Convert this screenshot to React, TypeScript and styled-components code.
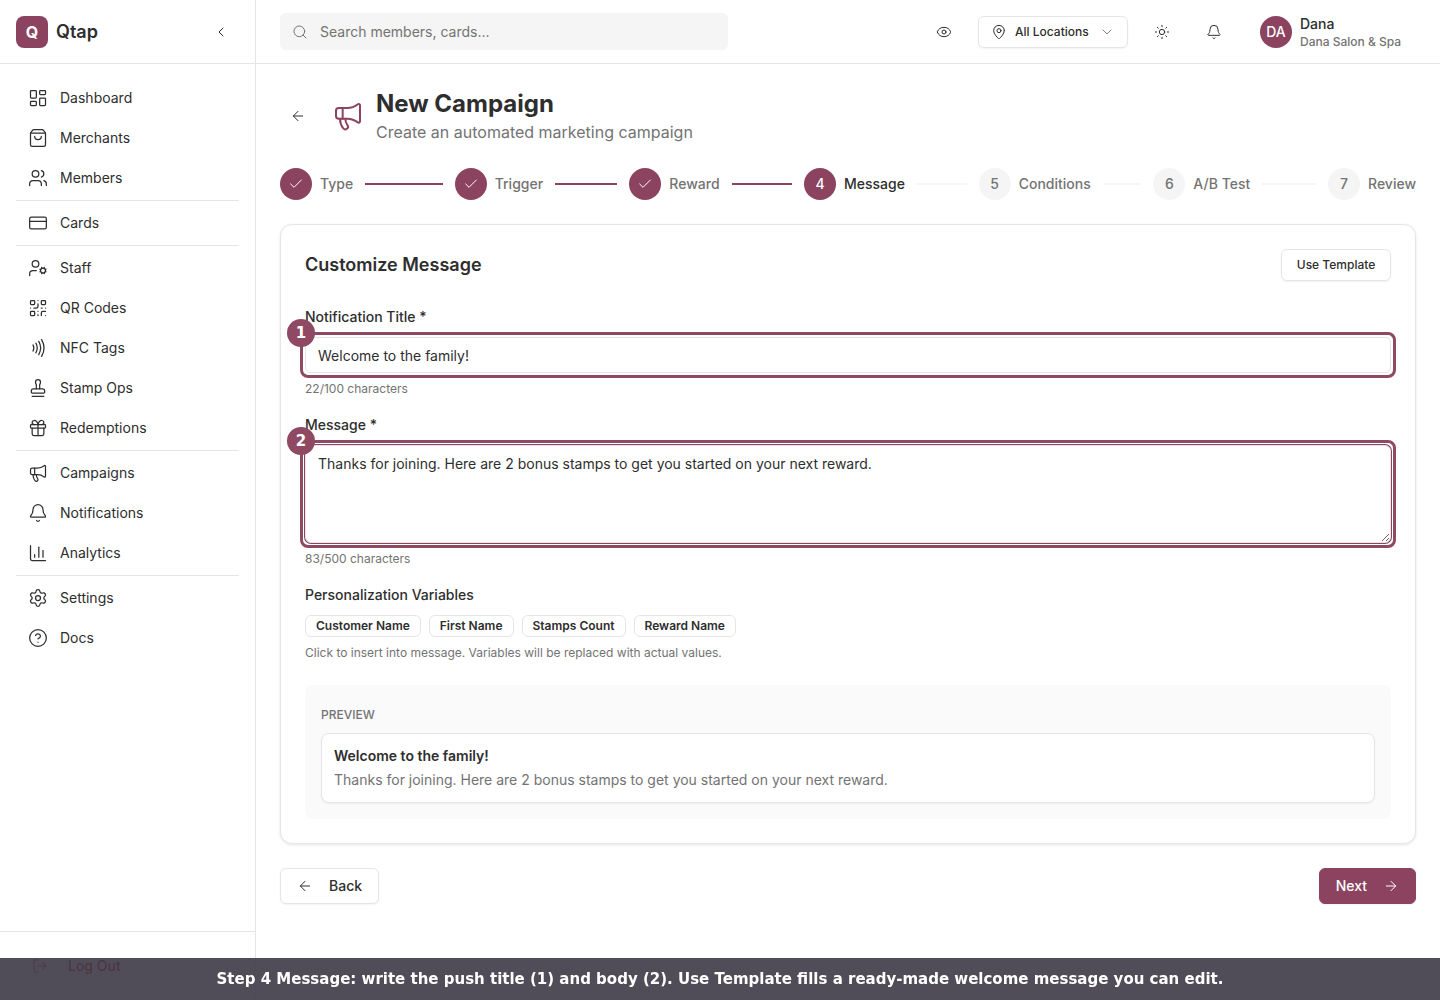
import React, { useState } from "react";
import styled, { createGlobalStyle, css } from "styled-components";
import {
  ArrowLeft,
  ArrowRight,
  Bell,
  ChartColumn,
  Check,
  ChevronDown,
  ChevronLeft,
  CircleQuestionMark,
  CreditCard,
  Eye,
  Gift,
  LayoutDashboard,
  LogOut,
  LucideIcon,
  MapPin,
  Megaphone,
  Nfc,
  QrCode,
  Search,
  Settings,
  ShoppingBag,
  Stamp,
  Sun,
  UserCog,
  Users,
} from "lucide-react";

const color = {
  brand: "#8b435f",
  callout: "#8f4962",
  text: "#2e2e2e",
  muted: "#737373",
  line: "#e5e5e5",
  soft: "#f5f5f5",
  softer: "#fafafa",
};

const GlobalStyle = createGlobalStyle`
  *, *::before, *::after { box-sizing: border-box; }
  body {
    margin: 0;
    background: #fff;
    color: ${color.text};
    font-family: Inter, "Liberation Sans", sans-serif;
    font-size: 14px;
    line-height: 20px;
  }
  button, input, textarea, select { font: inherit; color: inherit; }
  button { cursor: pointer; }
  h1, h2, p { margin: 0; }
`;

const Shell = styled.div`
  display: grid;
  grid-template-columns: 256px minmax(0, 1fr);
  min-height: 100vh;
`;

const Sidebar = styled.aside`
  position: sticky;
  top: 0;
  height: 100vh;
  display: flex;
  flex-direction: column;
  border-right: 1px solid ${color.line};
`;

const Brand = styled.div`
  display: flex;
  align-items: center;
  gap: 8px;
  height: 64px;
  padding: 0 16px;
  border-bottom: 1px solid ${color.line};
`;

const Logo = styled.span`
  display: grid;
  place-items: center;
  width: 32px;
  height: 32px;
  border-radius: 8px;
  background: ${color.brand};
  color: #fff;
  font-size: 16px;
  font-weight: 700;
`;

const BrandName = styled.span`
  flex: 1;
  font-size: 18px;
  font-weight: 600;
  line-height: 28px;
`;

const IconButton = styled.button`
  display: grid;
  place-items: center;
  width: 36px;
  height: 36px;
  padding: 0;
  border: 0;
  border-radius: 6px;
  background: transparent;
`;

const Nav = styled.nav`
  flex: 1;
  padding: 16px;
`;

const NavGroup = styled.div`
  display: flex;
  flex-direction: column;
  gap: 4px;

  & + & {
    margin-top: 4px;
    padding-top: 4px;
    border-top: 1px solid ${color.line};
  }
`;

const NavLink = styled.a`
  display: flex;
  align-items: center;
  gap: 12px;
  height: 36px;
  padding: 0 12px;
  border-radius: 6px;
  color: inherit;
  text-decoration: none;
`;

const SidebarFooter = styled.div`
  padding: 16px;
  border-top: 1px solid ${color.line};
`;

const LogOutButton = styled.button`
  display: flex;
  align-items: center;
  gap: 20px;
  width: 100%;
  height: 36px;
  padding: 0 16px;
  border: 0;
  background: transparent;
  color: #b91c1c;
  font-weight: 500;
`;

const Column = styled.div`
  display: flex;
  flex-direction: column;
`;

const TopBar = styled.header`
  display: flex;
  align-items: center;
  justify-content: space-between;
  height: 64px;
  padding: 0 24px;
  border-bottom: 1px solid ${color.line};
`;

const SearchBox = styled.label`
  display: flex;
  align-items: center;
  gap: 12px;
  flex: 0 1 448px;
  height: 37px;
  padding: 0 12px;
  border-radius: 6px;
  background: ${color.soft};
  color: ${color.muted};

  input {
    flex: 1;
    min-width: 0;
    padding: 0;
    border: 0;
    outline: 0;
    background: transparent;
  }
  input::placeholder { color: ${color.muted}; opacity: 1; }
`;

const TopActions = styled.div`
  display: flex;
  align-items: center;
  gap: 16px;
`;

const buttonFrame = css`
  display: inline-flex;
  align-items: center;
  border: 1px solid ${color.line};
  border-radius: 6px;
  background: #fff;
  box-shadow: 0 1px 2px rgba(0, 0, 0, 0.05);
  font-weight: 500;
`;

const smallFrame = css`
  ${buttonFrame}
  height: 32px;
  padding: 0 12px;
  font-size: 12px;
  line-height: 16px;
`;

const SmallButton = styled.button`
  ${smallFrame}
  justify-content: center;
  min-width: 110px;
`;

const LocationPicker = styled.label`
  ${smallFrame}
  gap: 8px;
  min-width: 150px;

  select {
    flex: 1;
    padding: 0;
    border: 0;
    outline: 0;
    appearance: none;
    background: transparent;
  }
  svg:last-child { opacity: 0.6; }
`;

const Account = styled.button`
  display: flex;
  align-items: center;
  gap: 8px;
  min-width: 168px;
  padding: 0 12px;
  border: 0;
  background: transparent;
  text-align: left;
  font-weight: 500;
`;

const Avatar = styled.span`
  display: grid;
  place-items: center;
  width: 32px;
  height: 32px;
  border-radius: 50%;
  background: ${color.brand};
  color: #fff;
`;

const AccountText = styled.span`
  display: flex;
  flex-direction: column;

  small {
    color: ${color.muted};
    font-size: 12px;
    line-height: 16px;
  }
`;

const Main = styled.main`
  display: flex;
  flex-direction: column;
  gap: 24px;
  padding: 24px 24px 96px;
`;

const PageHead = styled.div`
  display: flex;
  align-items: center;
  gap: 16px;
  height: 56px;
`;

const PageTitle = styled.div`
  display: flex;
  align-items: center;
  gap: 12px;

  svg { color: ${color.brand}; }
  h1 { font-size: 24px; font-weight: 700; line-height: 32px; }
  p { color: ${color.muted}; font-size: 16px; line-height: 24px; }
`;

const Steps = styled.ol`
  display: flex;
  align-items: center;
  gap: 12px;
  margin: 0;
  padding: 0;
  list-style: none;
`;

type StepState = "done" | "current" | "next";

const Step = styled.li<{ $state: StepState; $last: boolean }>`
  display: flex;
  align-items: center;
  flex: ${(p) => (p.$last ? "0 0 auto" : "1 1 0")};
  gap: 8px;
  color: ${(p) => (p.$state === "current" ? color.text : color.muted)};
  font-weight: 500;
  white-space: nowrap;
`;

const StepDot = styled.span<{ $state: StepState }>`
  display: grid;
  place-items: center;
  flex: none;
  width: 32px;
  height: 32px;
  border-radius: 50%;
  background: ${(p) => (p.$state === "next" ? color.soft : color.brand)};
  color: ${(p) => (p.$state === "next" ? color.muted : "#fff")};
`;

const StepLine = styled.span<{ $done: boolean }>`
  flex: 1;
  height: 2px;
  margin-left: 4px;
  background: ${(p) => (p.$done ? color.brand : color.soft)};
`;

const Card = styled.section`
  display: flex;
  flex-direction: column;
  gap: 24px;
  padding: 24px;
  border: 1px solid ${color.line};
  border-radius: 12px;
  background: #fff;
  box-shadow: 0 1px 3px rgba(0, 0, 0, 0.1);
`;

const CardHead = styled.div`
  display: flex;
  align-items: center;
  justify-content: space-between;

  h2 { font-size: 18px; font-weight: 600; line-height: 28px; }
`;

const Fields = styled.div`
  display: flex;
  flex-direction: column;
  gap: 16px;
`;

const Field = styled.div`
  display: flex;
  flex-direction: column;
  gap: 8px;
`;

const labelText = css`
  font-size: 14px;
  font-weight: 500;
  line-height: 24px;
`;

const Label = styled.label`${labelText}`;
const GroupLabel = styled.p`${labelText}`;

const Hint = styled.p`
  color: ${color.muted};
  font-size: 12px;
  line-height: 16px;
`;

const Callout = styled.div`
  position: relative;
  display: flex;

  &::after {
    content: "";
    position: absolute;
    inset: -5px;
    border: 3px solid ${color.callout};
    border-radius: 8px;
    pointer-events: none;
  }
`;

const CalloutNumber = styled.span`
  position: absolute;
  top: -18px;
  left: -18px;
  z-index: 1;
  display: grid;
  place-items: center;
  width: 28px;
  height: 28px;
  border-radius: 50%;
  background: ${color.callout};
  color: #fff;
  font: 700 15px/18px "DejaVu Sans", sans-serif;
`;

const inputFrame = css`
  width: 100%;
  border: 1px solid ${color.line};
  border-radius: 6px;
  outline: 0;
  background: #fff;
`;

const TextInput = styled.input`
  ${inputFrame}
  height: 36px;
  padding: 0 12px;
`;

const TextArea = styled.textarea`
  ${inputFrame}
  height: 98px;
  padding: 8px 12px;
  box-shadow: 0 0 0 1px ${color.brand};
  resize: vertical;
`;

const Chips = styled.div`
  display: flex;
  flex-wrap: wrap;
  gap: 8px;
`;

const Chip = styled.button`
  height: 22px;
  padding: 0 10px;
  border: 1px solid ${color.line};
  border-radius: 6px;
  background: #fff;
  font-size: 12px;
  font-weight: 600;
  line-height: 16px;
`;

const Preview = styled.div`
  display: flex;
  flex-direction: column;
  gap: 8px;
  padding: 20px 16px 16px;
  border-radius: 8px;
  background: ${color.softer};
`;

const PreviewLabel = styled.p`
  color: ${color.muted};
  font-size: 12px;
  font-weight: 500;
  line-height: 20px;
  text-transform: uppercase;
`;

const PreviewCard = styled.div`
  display: flex;
  flex-direction: column;
  gap: 4px;
  padding: 12px;
  border: 1px solid ${color.line};
  border-radius: 8px;
  background: #fff;
  box-shadow: 0 1px 2px rgba(0, 0, 0, 0.05);

  strong { font-weight: 600; }
  p { color: ${color.muted}; }
`;

const Actions = styled.div`
  display: flex;
  justify-content: space-between;
`;

const ActionButton = styled.button<{ $primary?: boolean }>`
  ${buttonFrame}
  height: 36px;
  gap: 16px;
  padding: 0 16px;
  ${(p) =>
    p.$primary &&
    css`
      border-color: ${color.brand};
      background: ${color.brand};
      color: #fff;
    `}
`;

const Caption = styled.div`
  position: fixed;
  right: 0;
  bottom: 0;
  left: 0;
  z-index: 10;
  padding: 12px 24px;
  background: rgba(62, 58, 70, 0.9);
  color: #fff;
  font: 700 15px/18px "DejaVu Sans", sans-serif;
  text-align: center;
`;

const navGroups: [string, LucideIcon][][] = [
  [
    ["Dashboard", LayoutDashboard],
    ["Merchants", ShoppingBag],
    ["Members", Users],
  ],
  [["Cards", CreditCard]],
  [
    ["Staff", UserCog],
    ["QR Codes", QrCode],
    ["NFC Tags", Nfc],
    ["Stamp Ops", Stamp],
    ["Redemptions", Gift],
  ],
  [
    ["Campaigns", Megaphone],
    ["Notifications", Bell],
    ["Analytics", ChartColumn],
  ],
  [
    ["Settings", Settings],
    ["Docs", CircleQuestionMark],
  ],
];

const steps = ["Type", "Trigger", "Reward", "Message", "Conditions", "A/B Test", "Review"];
const currentStep = 3;
const variables = ["Customer Name", "First Name", "Stamps Count", "Reward Name"];
const small = { size: 16, strokeWidth: 1.5 };

export default function App() {
  const [title, setTitle] = useState("Welcome to the family!");
  const [message, setMessage] = useState(
    "Thanks for joining. Here are 2 bonus stamps to get you started on your next reward."
  );

  return (
    <>
      <GlobalStyle />
      <Shell>
        <Sidebar>
          <Brand>
            <Logo>Q</Logo>
            <BrandName>Qtap</BrandName>
            <IconButton aria-label="Collapse sidebar">
              <ChevronLeft {...small} />
            </IconButton>
          </Brand>
          <Nav>
            {navGroups.map((group) => (
              <NavGroup key={group[0][0]}>
                {group.map(([name, Icon]) => (
                  <NavLink key={name} href="#">
                    <Icon size={20} strokeWidth={1.5} />
                    {name}
                  </NavLink>
                ))}
              </NavGroup>
            ))}
          </Nav>
          <SidebarFooter>
            <LogOutButton>
              <LogOut {...small} />
              Log Out
            </LogOutButton>
          </SidebarFooter>
        </Sidebar>

        <Column>
          <TopBar>
            <SearchBox>
              <Search {...small} />
              <input aria-label="Search" placeholder="Search members, cards..." />
            </SearchBox>
            <TopActions>
              <IconButton aria-label="View">
                <Eye {...small} />
              </IconButton>
              <LocationPicker>
                <MapPin {...small} />
                <select aria-label="Location">
                  <option>All Locations</option>
                </select>
                <ChevronDown {...small} />
              </LocationPicker>
              <IconButton aria-label="Theme">
                <Sun {...small} />
              </IconButton>
              <IconButton aria-label="Notifications">
                <Bell {...small} />
              </IconButton>
              <Account>
                <Avatar>DA</Avatar>
                <AccountText>
                  Dana
                  <small>Dana Salon &amp; Spa</small>
                </AccountText>
              </Account>
            </TopActions>
          </TopBar>

          <Main>
            <PageHead>
              <IconButton aria-label="Go back">
                <ArrowLeft {...small} />
              </IconButton>
              <PageTitle>
                <Megaphone size={32} strokeWidth={1.5} />
                <div>
                  <h1>New Campaign</h1>
                  <p>Create an automated marketing campaign</p>
                </div>
              </PageTitle>
            </PageHead>

            <Steps>
              {steps.map((name, i) => {
                const state: StepState = i < currentStep ? "done" : i === currentStep ? "current" : "next";
                const last = i === steps.length - 1;
                return (
                  <Step key={name} $state={state} $last={last}>
                    <StepDot $state={state}>{state === "done" ? <Check {...small} /> : i + 1}</StepDot>
                    {name}
                    {!last && <StepLine $done={state === "done"} />}
                  </Step>
                );
              })}
            </Steps>

            <Card>
              <CardHead>
                <h2>Customize Message</h2>
                <SmallButton>Use Template</SmallButton>
              </CardHead>
              <Fields>
                <Field>
                  <Label htmlFor="title">Notification Title *</Label>
                  <Callout>
                    <CalloutNumber>1</CalloutNumber>
                    <TextInput id="title" value={title} onChange={(e) => setTitle(e.target.value)} />
                  </Callout>
                  <Hint>22/100 characters</Hint>
                </Field>
                <Field>
                  <Label htmlFor="message">Message *</Label>
                  <Callout>
                    <CalloutNumber>2</CalloutNumber>
                    <TextArea id="message" value={message} onChange={(e) => setMessage(e.target.value)} />
                  </Callout>
                  <Hint>83/500 characters</Hint>
                </Field>
                <Field>
                  <GroupLabel>Personalization Variables</GroupLabel>
                  <Chips>
                    {variables.map((name) => (
                      <Chip key={name} onClick={() => setMessage(`${message} {${name}}`)}>
                        {name}
                      </Chip>
                    ))}
                  </Chips>
                  <Hint>Click to insert into message. Variables will be replaced with actual values.</Hint>
                </Field>
              </Fields>
              <Preview>
                <PreviewLabel>Preview</PreviewLabel>
                <PreviewCard>
                  <strong>{title}</strong>
                  <p>{message}</p>
                </PreviewCard>
              </Preview>
            </Card>

            <Actions>
              <ActionButton>
                <ArrowLeft {...small} />
                Back
              </ActionButton>
              <ActionButton $primary>
                Next
                <ArrowRight {...small} />
              </ActionButton>
            </Actions>
          </Main>
        </Column>
      </Shell>
      <Caption>
        Step 4 Message: write the push title (1) and body (2). Use Template fills a ready-made welcome message you can edit.
      </Caption>
    </>
  );
}
